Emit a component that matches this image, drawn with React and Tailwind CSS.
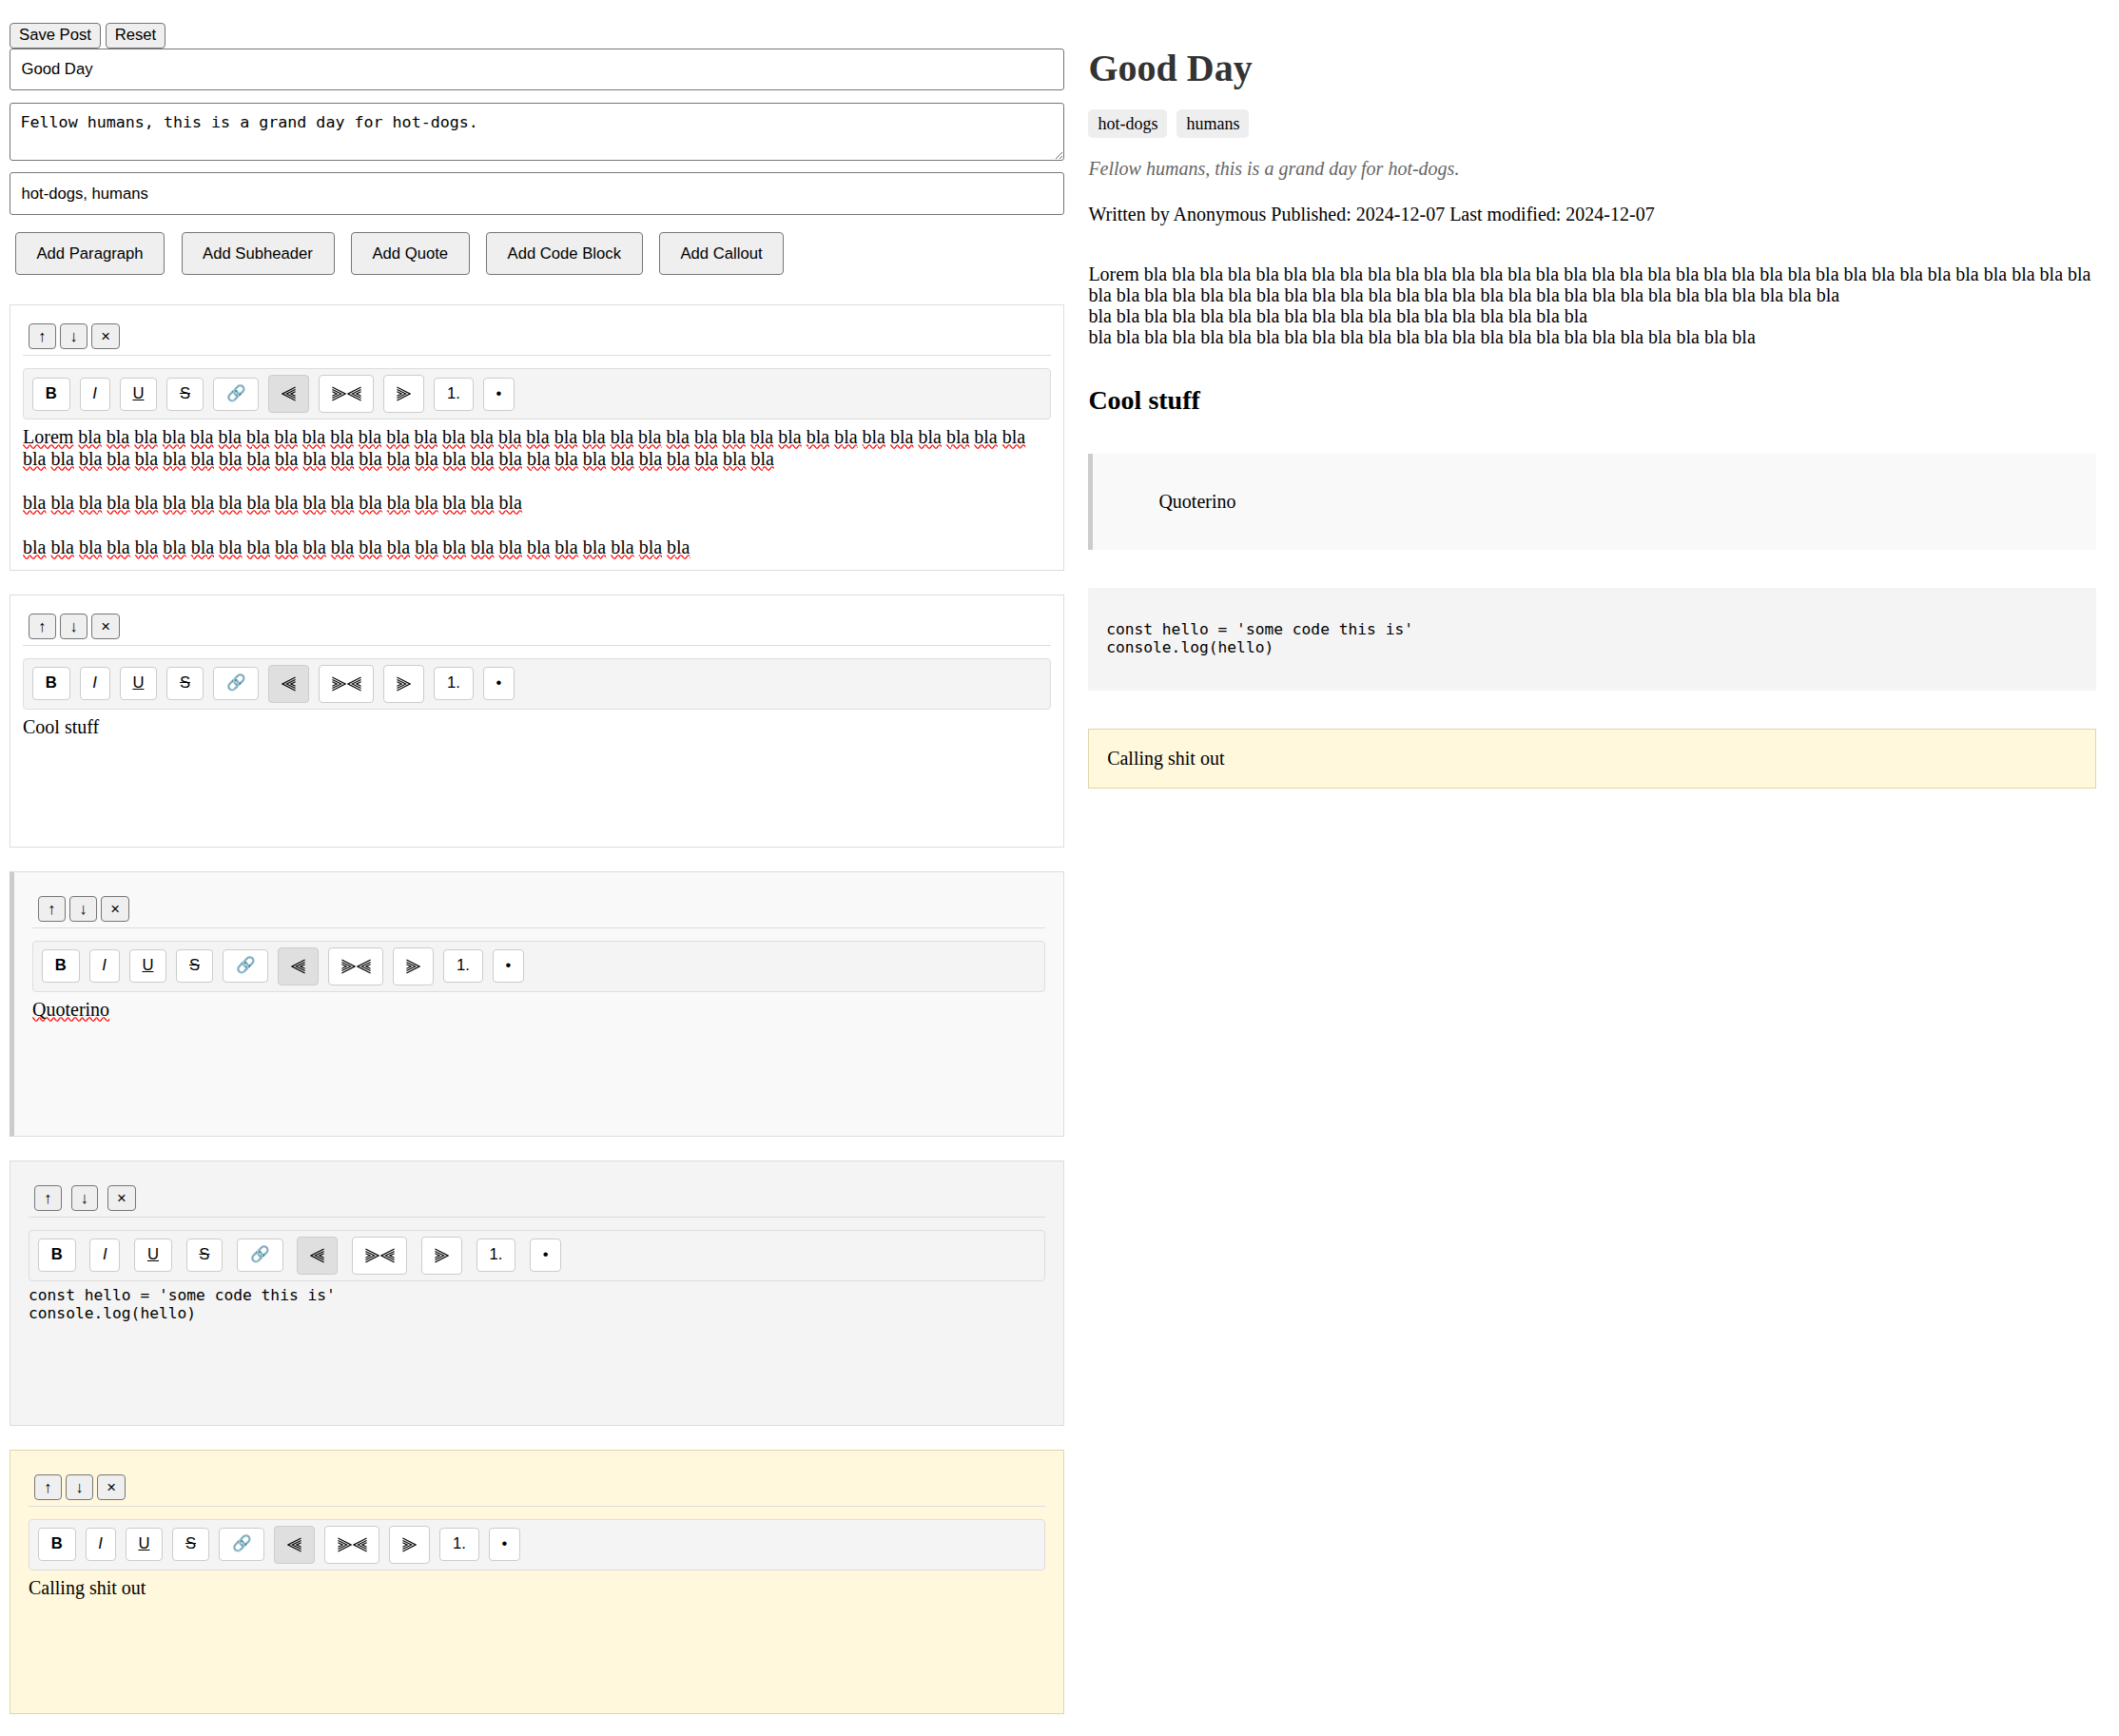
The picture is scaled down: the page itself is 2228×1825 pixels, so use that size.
import React from "react";

const bla = (n) => Array(n).fill("bla");

function NestedLess() {
  return (
    <svg width="15" height="16" viewBox="0 0 15 16" fill="none" stroke="currentColor" strokeWidth="1.15">
      <path d="M14.6 1.1 1 8l13.6 6.9" />
      <path d="M14.6 3.4 5.3 8l9.3 4.6" />
      <path d="M14.6 5.7 9.8 8l4.8 2.3" />
    </svg>
  );
}

function NestedGreater() {
  return (
    <svg width="15" height="16" viewBox="0 0 15 16" fill="none" stroke="currentColor" strokeWidth="1.15">
      <path d="M.4 1.1 14 8 .4 14.9" />
      <path d="M.4 3.4 9.7 8 .4 12.6" />
      <path d="M.4 5.7 5.2 8 .4 10.3" />
    </svg>
  );
}

const TOOLS = [
  { id: "bold", label: "B", cls: "h-[35px] pb-[2px] font-bold bg-white" },
  { id: "italic", label: "I", cls: "h-[35px] pb-[2px] italic bg-white" },
  { id: "underline", label: "U", cls: "h-[35px] pb-[2px] underline bg-white" },
  { id: "strike", label: "S", cls: "h-[35px] pb-[2px] line-through bg-white" },
  { id: "link", label: "🔗", cls: "h-[35px] pb-[2px] bg-white" },
  { id: "left", label: <NestedLess />, cls: "h-10 w-[43px] bg-[#dfdfdf]" },
  {
    id: "center",
    label: (
      <span className="flex gap-[1px]">
        <NestedGreater />
        <NestedLess />
      </span>
    ),
    cls: "h-10 w-[58px] bg-white",
  },
  { id: "right", label: <NestedGreater />, cls: "h-10 w-[43px] bg-white" },
  { id: "ordered", label: "1.", cls: "h-[35px] pb-[2px] bg-white" },
  { id: "bullets", label: "•", cls: "h-[35px] pb-[2px] bg-white" },
];

const sans = "font-['Liberation_Sans',Arial,sans-serif] text-[16.67px]";

function NativeButton({ className, children }) {
  return (
    <button
      className={`${sans} flex items-center justify-center whitespace-nowrap rounded-[4px] border border-[#767676] bg-[#efefef] leading-[19px] text-black ${className}`}
    >
      {children}
    </button>
  );
}

function Misspelled({ words }) {
  return words.map((w, i) => (
    <React.Fragment key={i}>
      {i > 0 && " "}
      <span className="[text-decoration-line:spelling-error]">{w}</span>
    </React.Fragment>
  ));
}

function Toolbar({ gap }) {
  return (
    <div className={`mt-[13px] flex h-[54px] items-center rounded-[4px] border border-[#dddddd] bg-[#f4f4f4] px-[9px] ${gap}`}>
      {TOOLS.map((t) => (
        <button
          key={t.id}
          className={`${sans} flex shrink-0 items-center justify-center whitespace-nowrap rounded-[4px] border border-[#cccccc] px-[12.75px] leading-[19px] text-black ${t.cls}`}
        >
          {t.label}
        </button>
      ))}
    </div>
  );
}

function Block({ className, controlsGap = "gap-[4.7px]", toolsGap = "gap-[10px]", children }) {
  return (
    <section className={className}>
      <div className={`flex h-[34px] border-b border-[#dddddd] pl-[6px] ${controlsGap}`}>
        <NativeButton className="h-[27px] w-[28.5px]">↑</NativeButton>
        <NativeButton className="h-[27px] w-[28.5px]">↓</NativeButton>
        <NativeButton className="h-[27px] w-[29.5px]">×</NativeButton>
      </div>
      <Toolbar gap={toolsGap} />
      {children}
    </section>
  );
}

export default function App() {
  const body = "mt-[5.6px] text-[16px] leading-[18.5px] [zoom:1.25]";
  return (
    <div className="flex h-[1825px] w-[2228px] bg-white font-['Liberation_Serif',serif] text-black">
      <main className="ml-[10px] w-[1109px] pt-[24px]">
        <div className="flex gap-[5px]">
          <NativeButton className="h-[27px] w-[96px] pb-[2px]">Save Post</NativeButton>
          <NativeButton className="h-[27px] w-[63px] pb-[2px]">Reset</NativeButton>
        </div>
        <input
          className={`${sans} block h-[44px] w-full rounded-[3px] border border-[#767676] px-[11.5px]`}
          defaultValue="Good Day"
        />
        <textarea
          className="mt-[12.5px] block h-[61.5px] w-full resize rounded-[3px] border border-[#767676] px-[10.5px] py-[10px] font-['DejaVu_Sans_Mono',monospace] text-[16.67px] leading-[19.5px]"
          defaultValue="Fellow humans, this is a grand day for hot-dogs."
        />
        <input
          className={`${sans} mt-[12px] block h-[45px] w-full rounded-[3px] border border-[#767676] px-[11.5px]`}
          defaultValue="hot-dogs, humans"
        />
        <div className="mt-[18px] flex gap-[17.5px] pl-[6px]">
          <NativeButton className="h-[45px] w-[157px]">Add Paragraph</NativeButton>
          <NativeButton className="h-[45px] w-[161px]">Add Subheader</NativeButton>
          <NativeButton className="h-[45px] w-[124.5px]">Add Quote</NativeButton>
          <NativeButton className="h-[45px] w-[164.5px]">Add Code Block</NativeButton>
          <NativeButton className="h-[45px] w-[131px]">Add Callout</NativeButton>
        </div>

        <div className="mt-[31px] flex flex-col gap-[25px]">
          <Block className="h-[279.7px] border border-[#dddddd] px-[13px] pt-[19px]">
            <div className={body}>
              <p className="pr-4">
                <Misspelled words={["Lorem", ...bla(61)]} />
              </p>
              <p className="mt-[18.5px]">
                <Misspelled words={bla(18)} />
              </p>
              <p className="mt-[18.5px]">
                <Misspelled words={bla(24)} />
              </p>
            </div>
          </Block>
          <Block className="h-[266px] border border-[#dddddd] px-[13px] pt-[19px]">
            <p className={body}>Cool stuff</p>
          </Block>
          <Block className="h-[279px] border border-l-[5px] border-[#dddddd] border-l-[#cccccc] bg-[#f9f9f9] px-[19px] pt-[25px]">
            <p className={body}>
              <Misspelled words={["Quoterino"]} />
            </p>
          </Block>
          <Block
            className="h-[279px] border border-[#dddddd] bg-[#f4f4f4] px-[19px] pt-[25px]"
            controlsGap="gap-[10px]"
            toolsGap="gap-[14.8px]"
          >
            <pre className="mt-[5.5px] font-['DejaVu_Sans_Mono',monospace] text-[16.25px] leading-[19px]">
              {"const hello = 'some code this is'\nconsole.log(hello)"}
            </pre>
          </Block>
          <Block className="h-[278.5px] border border-[#e0d6a8] bg-[#fff8dc] px-[19px] pt-[25px]">
            <p className={body}>Calling shit out</p>
          </Block>
        </div>
      </main>

      <article className="ml-[25.4px] w-[1059.6px] pt-[49px] text-[20px] leading-[22px]">
        <h1 className="text-[40px] font-bold leading-[46px] text-[#333333]">Good Day</h1>
        <div className="mt-[20px] flex gap-[10px]">
          <span className="h-[30px] rounded-[5px] bg-[#eeeeee] px-[10px] text-[18px] leading-[30px]">hot-dogs</span>
          <span className="h-[30px] rounded-[5px] bg-[#eeeeee] px-[10px] text-[18px] leading-[30px]">humans</span>
        </div>
        <p className="mt-[21px] italic text-[#666666]">Fellow humans, this is a grand day for hot-dogs.</p>
        <p className="mt-[26px]">Written by Anonymous Published: 2024-12-07 Last modified: 2024-12-07</p>
        <div className="mt-[41px]">
          <p>{["Lorem", ...bla(61)].join(" ")}</p>
          <p>{bla(18).join(" ")}</p>
          <p>{bla(24).join(" ")}</p>
        </div>
        <h2 className="mt-[40px] text-[28px] font-bold leading-[32px]">Cool stuff</h2>
        <blockquote className="mt-[40px] h-[101px] border-l-[5px] border-[#cccccc] bg-[#f9f9f9] pl-[69px] pt-[39px]">
          Quoterino
        </blockquote>
        <pre className="mt-[40px] h-[108px] bg-[#f4f4f4] pl-[18.75px] pt-[34px] font-['DejaVu_Sans_Mono',monospace] text-[16.25px] leading-[19px]">
          {"const hello = 'some code this is'\nconsole.log(hello)"}
        </pre>
        <p className="mt-[40px] h-[63px] border border-[#e0d6a8] bg-[#fff8dc] pl-[18.75px] pt-[18.5px]">
          Calling shit out
        </p>
      </article>
    </div>
  );
}
